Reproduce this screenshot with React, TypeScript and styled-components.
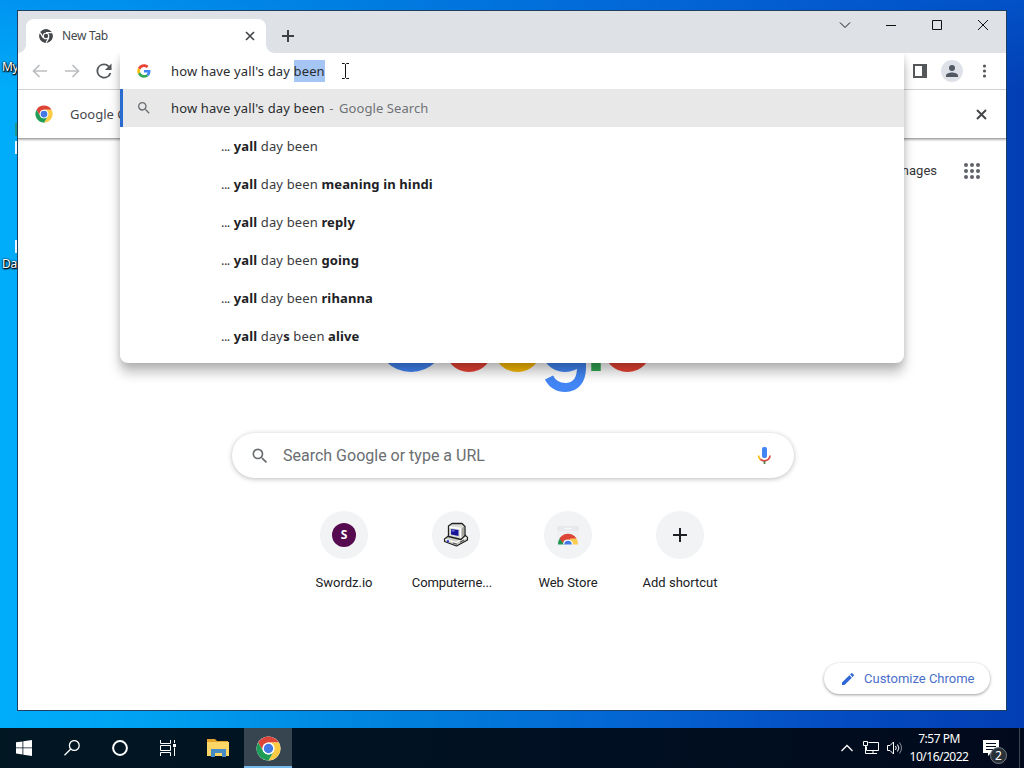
import React from 'react';
import styled, { createGlobalStyle } from 'styled-components';

const GlobalStyle = createGlobalStyle`
  * {
    box-sizing: border-box;
  }
  body {
    margin: 0;
    overflow: hidden;
  }
  svg {
    display: block;
    flex: none;
  }
`;

const Desktop = styled.div`
  position: relative;
  display: flex;
  flex-direction: column;
  justify-content: flex-end;
  width: 1024px;
  height: 768px;
  overflow: hidden;
  background:
    linear-gradient(180deg, rgba(0, 110, 225, 0.4), transparent 12%),
    linear-gradient(90deg, #00adfa 0%, #00a4f4 12%, #0082de 38%, #0464d2 62%, #044ac0 84%, #033eb4 100%);
  font-family: 'Noto Sans', 'Open Sans', sans-serif;
  color: #202124;
`;

const DesktopLabel = styled.span<{ $top: number }>`
  position: absolute;
  left: 2px;
  top: ${(p) => p.$top}px;
  font-size: 12px;
  line-height: 16px;
  letter-spacing: -0.3px;
  color: #fff;
  text-shadow: 1px 1px 1px #000, 0 0 2px #000, 0 1px 2px #000;
`;

const DesktopSliver = styled.span<{ $top: number; $color: string }>`
  position: absolute;
  left: 15px;
  top: ${(p) => p.$top}px;
  width: 2px;
  height: 13px;
  background: ${(p) => p.$color};
`;

const Window = styled.div`
  position: absolute;
  left: 17px;
  top: 10px;
  width: 990px;
  height: 701px;
  display: flex;
  flex-direction: column;
  border: 1px solid #1c3f63;
  background: #fff;
`;

const TitleBar = styled.div`
  display: flex;
  height: 42px;
  flex: none;
  padding-left: 8px;
  background: #dee1e6;
`;

const Tab = styled.div`
  position: relative;
  display: flex;
  align-items: center;
  width: 240px;
  height: 34px;
  margin-top: 8px;
  padding: 0 11px 0 13px;
  border-radius: 8px 8px 0 0;
  background: #fff;
  font-size: 12px;
  color: #45494d;

  &::before,
  &::after {
    content: '';
    position: absolute;
    bottom: 0;
    width: 8px;
    height: 8px;
  }
  &::before {
    left: -8px;
    background: radial-gradient(circle at 0 0, transparent 7.5px, #fff 8px);
  }
  &::after {
    right: -8px;
    background: radial-gradient(circle at 100% 0, transparent 7.5px, #fff 8px);
  }
`;

const TabTitle = styled.span`
  flex: 1;
  margin-left: 9px;
  padding-bottom: 1px;
  letter-spacing: -0.3px;
`;

const NewTabButton = styled.div`
  margin: 19px 0 0 16px;
`;

const WindowButtons = styled.div`
  display: flex;
  margin-left: auto;
`;

const WindowButton = styled.div`
  display: flex;
  justify-content: center;
  width: 46px;
  padding-top: 6px;
`;

const Toolbar = styled.div`
  display: flex;
  align-items: center;
  height: 37px;
  flex: none;
  padding: 0 12px 0 14px;
  border-bottom: 1px solid #d5d7da;
`;

const NavButtons = styled.div`
  display: flex;
  gap: 16px;
`;

const ToolbarActions = styled.div`
  display: flex;
  align-items: center;
  gap: 13px;
  margin-left: auto;
`;

const Avatar = styled.div`
  display: flex;
  align-items: center;
  justify-content: center;
  width: 22px;
  height: 22px;
  border-radius: 50%;
  background: #dee1e8;
`;

const InfoBar = styled.div`
  display: flex;
  align-items: center;
  height: 49px;
  flex: none;
  padding: 0 19px 0 17px;
  border-bottom: 1px solid #a9a9a9;
  box-shadow: 0 1px 2px rgba(0, 0, 0, 0.3);
  font-size: 13px;
  color: #45494d;
`;

const InfoText = styled.span`
  flex: 1;
  margin-left: 17px;
`;

const Page = styled.div`
  position: relative;
  display: flex;
  flex: 1;
  flex-direction: column;
  align-items: center;
  font-family: Roboto, sans-serif;
`;

const PageHeader = styled.div`
  display: flex;
  align-items: center;
  justify-content: flex-end;
  gap: 26px;
  width: 100%;
  height: 63px;
  padding-right: 25px;
  font-size: 13px;
  color: #333;
`;

const SearchBox = styled.div`
  display: flex;
  align-items: center;
  width: 562px;
  height: 45px;
  margin: 40px 0 0 1px;
  padding: 0 23px 0 18px;
  border-radius: 23px;
  background: #fff;
  box-shadow: 0 1px 5px rgba(32, 33, 36, 0.3);
  font-size: 16px;
  color: #6b6e71;
`;

const SearchText = styled.span`
  flex: 1;
  margin-left: 13.5px;
`;

const Shortcuts = styled.div`
  display: flex;
  margin-top: 33px;
`;

const Shortcut = styled.div`
  display: flex;
  flex-direction: column;
  align-items: center;
  width: 112px;
  font-size: 13px;
  line-height: 16px;
  color: #202124;
`;

const ShortcutIcon = styled.div`
  display: flex;
  align-items: center;
  justify-content: center;
  width: 48px;
  height: 48px;
  margin-bottom: 16px;
  border-radius: 50%;
  background: #f1f3f4;
`;

const ShortcutName = styled.span<{ $clipped?: boolean }>`
  margin-right: ${(p) => (p.$clipped ? 8 : 0)}px;
  letter-spacing: ${(p) => (p.$clipped ? '-0.1px' : 'normal')};
`;

const LetterIcon = styled.div`
  width: 24px;
  height: 24px;
  border-radius: 50%;
  background: #560a50;
  font: bold 12px/24px 'Noto Sans', sans-serif;
  text-align: center;
  color: #fff;
`;

const CustomizeButton = styled.div`
  position: absolute;
  right: 16px;
  bottom: 16px;
  display: flex;
  align-items: center;
  gap: 8px;
  width: 166px;
  height: 31px;
  padding-left: 16px;
  border-radius: 16px;
  background: #fff;
  box-shadow: 0 1px 3px rgba(32, 33, 36, 0.45);
  font-size: 13px;
  color: #4a6fc9;
  white-space: nowrap;
`;

const Omnibox = styled.div`
  position: absolute;
  left: 102px;
  top: 42px;
  width: 784px;
  height: 310px;
  border-radius: 0 0 8px 8px;
  background: #fff;
  box-shadow: 0 10px 12px rgba(0, 0, 0, 0.24), 0 2px 6px rgba(0, 0, 0, 0.12);
  clip-path: inset(0 -20px -40px -20px);
  font-size: 13px;
  color: #2a2c2f;
`;

const OmniboxRow = styled.div<{ $selected?: boolean; $height: number }>`
  display: flex;
  align-items: center;
  height: ${(p) => p.$height}px;
  padding-left: ${(p) => (p.$selected ? 13 : 17)}px;
  border-left: ${(p) => (p.$selected ? '3px solid #2a6bd0' : 'none')};
  background: ${(p) => (p.$selected ? '#e8e8e8' : 'transparent')};
`;

const OmniboxText = styled.span<{ $gap: number }>`
  margin-left: ${(p) => p.$gap}px;
  letter-spacing: 0.13px;
  white-space: pre;
`;

const Selection = styled.span`
  padding: 2px 0;
  background: #a5c5f5;
`;

const Muted = styled.span`
  letter-spacing: 0.08px;
  color: #6f7377;
`;

const Dash = styled.span`
  margin: 0 2px 0 1px;
`;

const Suggestion = styled.div`
  display: flex;
  align-items: center;
  height: 38px;
  padding-left: 101px;
  letter-spacing: 0.14px;
  white-space: pre;
  color: #3a3c40;

  b {
    color: #202124;
  }
`;

const Ellipsis = styled.span`
  letter-spacing: -0.6px;
  word-spacing: 1.3px;
`;

const MouseCursor = styled.div`
  position: absolute;
  left: 341px;
  top: 63px;
`;

const Taskbar = styled.div`
  display: flex;
  height: 40px;
  background: linear-gradient(90deg, #011722, #010f22 60%, #010a1c);
  color: #fff;
`;

const TaskButton = styled.div<{ $active?: boolean; $width?: number }>`
  display: flex;
  align-items: center;
  justify-content: center;
  width: ${(p) => p.$width ?? 48}px;
  padding-top: ${(p) => (p.$active ? 2 : 0)}px;
  background: ${(p) => (p.$active ? '#364550' : 'transparent')};
  border-bottom: ${(p) => (p.$active ? '2px solid #76b9ed' : 'none')};
`;

const Tray = styled.div`
  display: flex;
  align-items: center;
  margin: 0 4px 0 auto;
  padding-right: 12px;
  border-right: 1px solid #3d4550;
`;

const TrayIcon = styled.div<{ $gap?: number }>`
  margin-right: ${(p) => p.$gap ?? 8}px;
`;

const Clock = styled.div`
  width: 62px;
  margin-right: 13px;
  font-size: 12px;
  line-height: 18px;
  letter-spacing: -0.5px;
  text-align: center;
  white-space: nowrap;
`;

const Notifications = styled.div`
  position: relative;
`;

const Badge = styled.span`
  position: absolute;
  left: 7px;
  top: 8px;
  width: 17px;
  height: 17px;
  border: 1px solid #777d84;
  border-radius: 50%;
  background: #2a3038;
  font-size: 12px;
  line-height: 15px;
  text-align: center;
`;

const ChromeLogo = ({ size, mono }: { size: number; mono?: boolean }) => (
  <svg width={size} height={size} viewBox="0 0 48 48">
    <circle cx="24" cy="24" r="23" fill={mono ? '#45484b' : '#fff'} />
    <path d="M4.1 12.5A23 23 0 0 1 43.9 12.5H24A11.5 11.5 0 0 0 14 29.7z" fill={mono ? '#45484b' : '#dc4437'} />
    <path d="M43.9 12.5A23 23 0 0 1 24 47L34 29.7A11.5 11.5 0 0 0 24 12.5z" fill={mono ? '#45484b' : '#fbcb43'} />
    <path d="M24 47A23 23 0 0 1 4.1 12.5L14 29.7A11.5 11.5 0 0 0 34 29.7z" fill={mono ? '#45484b' : '#1f9d57'} />
    {mono && <path d="M24 12.5h20M34 29.7L24 47M14 29.7L4.1 12.5" stroke="#fff" strokeWidth="4" />}
    <circle cx="24" cy="24" r="11.5" fill="#fff" />
    <circle cx="24" cy="24" r={mono ? 7.5 : 9} fill={mono ? '#45484b' : '#4279e4'} />
  </svg>
);

const GoogleG = () => (
  <svg width="14" height="14" viewBox="-1 -1 50 50">
    <path fill="#ea4335" d="M24 9.5c3.54 0 6.71 1.22 9.21 3.6l6.85-6.85C35.9 2.38 30.47 0 24 0 14.62 0 6.51 5.38 2.56 13.22l7.98 6.19C12.43 13.72 17.74 9.5 24 9.5z" />
    <path fill="#4285f4" d="M46.98 24.55c0-1.57-.15-3.09-.38-4.55H24v9.02h12.94c-.58 2.96-2.26 5.48-4.78 7.18l7.73 6c4.51-4.18 7.09-10.36 7.09-17.65z" />
    <path fill="#fbbc05" d="M10.53 28.59c-.48-1.45-.76-2.99-.76-4.59s.27-3.14.76-4.59l-7.98-6.19C.92 16.46 0 20.12 0 24c0 3.88.92 7.54 2.56 10.78l7.97-6.19z" />
    <path fill="#34a853" d="M24 48c6.48 0 11.93-2.13 15.89-5.81l-7.73-6c-2.15 1.45-4.92 2.3-8.16 2.3-6.26 0-11.57-4.22-13.47-9.91l-7.98 6.19C6.51 42.62 14.62 48 24 48z" />
  </svg>
);

const SearchIcon = ({ size }: { size: number }) => (
  <svg width={size} height={size} viewBox="0 0 24 24" fill="#6a6d70">
    <path d="M15.5 14h-.79l-.28-.27A6.47 6.47 0 0 0 16 9.5 6.5 6.5 0 1 0 9.5 16c1.61 0 3.09-.59 4.23-1.57l.27.28v.79l5 4.99L20.49 19l-4.99-5zm-6 0C7.01 14 5 11.99 5 9.5S7.01 5 9.5 5 14 7.01 14 9.5 11.99 14 9.5 14z" />
  </svg>
);

const ArrowIcon = ({ right }: { right?: boolean }) => (
  <svg width="16" height="16" viewBox="0 0 16 16" fill="none" stroke="#bcbec1" strokeWidth="1.7">
    <path d={right ? 'M1 8h13M8.5 2l6 6-6 6' : 'M15 8H2M7.5 2l-6 6 6 6'} />
  </svg>
);

const ReloadIcon = () => (
  <svg width="16" height="16" viewBox="3.5 3.5 17 17" fill="#55585b">
    <path d="M17.65 6.35A7.96 7.96 0 0 0 12 4a8 8 0 1 0 7.73 10h-2.08A6 6 0 1 1 12 6c1.66 0 3.14.69 4.22 1.78L13 11h7V4l-2.35 2.35z" />
  </svg>
);

const CloseIcon = ({ size, width }: { size: number; width: number }) => (
  <svg width={size} height={size} viewBox={`0 0 ${size} ${size}`} stroke="#45484b" strokeWidth={width}>
    <path d={`M1 1L${size - 1} ${size - 1}M${size - 1} 1L1 ${size - 1}`} />
  </svg>
);

const AppsIcon = () => (
  <svg width="18" height="18" viewBox="0 0 18 18" fill="#5f6368">
    {[3, 9, 15].map((y) => [3, 9, 15].map((x) => <circle key={`${x}-${y}`} cx={x} cy={y} r="2" />))}
  </svg>
);

const LogoArt = styled.svg`
  width: 272px;
  height: 92px;
  margin-top: 99px;
`;

const GoogleLogo = () => (
  <LogoArt viewBox="376 301 272 92" fill="none">
    <circle cx="411" cy="337" r="30.5" stroke="#4285f4" strokeWidth="9" />
    <circle cx="469" cy="348" r="19.5" stroke="#ea4335" strokeWidth="9" />
    <circle cx="517.5" cy="348" r="19.5" stroke="#fbbc05" strokeWidth="9" />
    <circle cx="565" cy="348" r="19.5" stroke="#4285f4" strokeWidth="9" />
    <path d="M581.5 330V367.5C581.5 380.5 575 387.5 565.5 387.5C558 387.5 552 383.5 549 377.5" stroke="#4285f4" strokeWidth="9" />
    <path d="M596 302V371" stroke="#34a853" strokeWidth="9.5" />
    <circle cx="627.5" cy="348" r="19.5" stroke="#ea4335" strokeWidth="9" />
  </LogoArt>
);

const MicIcon = () => (
  <svg width="14" height="19" viewBox="0 0 14 19" fill="none">
    <rect x="5" y="1" width="5" height="11" rx="2" fill="#4285f4" />
    <path d="M1.5 9.5Q1.7 12 3.3 13.3" stroke="#fbbc05" strokeWidth="1.7" />
    <path d="M3.3 13.3Q7.4 16.3 11.3 13.3Q12.9 12 13.1 9.5" stroke="#d5483b" strokeWidth="1.7" />
    <path d="M7.5 15v3" stroke="#54804c" strokeWidth="1.8" />
  </svg>
);

const ComputerIcon = () => (
  <svg width="26" height="26" viewBox="0 0 26 26" strokeLinejoin="round">
    <path d="M1.5 17L6 13.5 21 12l3.5 3.5v2.5L13.5 24 1.5 19.5z" fill="#cfcfc9" stroke="#222" strokeWidth="1.2" />
    <path d="M2.5 17.3L13 20.5l10.5-5" fill="none" stroke="#fff" strokeWidth="1.3" />
    <path d="M5.5 4L9 1.5h10L22 4.500v9l-4 4-12.500-3z" fill="#dcdcd6" stroke="#222" strokeWidth="1.3" />
    <path d="M18.5 6.500l2.500-2v8.500l-2.500 2.500z" fill="#a5a59f" />
    <path d="M6.5 5L17.500 6.500v9.500" fill="none" stroke="#fff" strokeWidth="1.3" />
    <path d="M8 7l7.500 1v6L8 12.500z" fill="#18149a" />
    <path d="M8.500 7.500h3v2.500l-3-.5z" fill="#5d5dc8" />
    <path d="M10 21l4 1.300M17 20.200l4-2.200" stroke="#555" strokeWidth="1.200" />
    <path d="M4 18.700l2 .7" stroke="#3341dd" strokeWidth="2" />
  </svg>
);

const WebStoreIcon = () => (
  <svg width="24" height="24" viewBox="0 0 24 24">
    <path d="M1 3h22v17q0 1-1 1H2q-1 0-1-1z" fill="#eef0f1" />
    <path d="M1 3h22v5H1z" fill="#e7e9ec" />
    <path d="M9 5.5h6" stroke="#f8f9fa" strokeWidth="1.5" strokeLinecap="round" />
    <path d="M2 21.5a10 10 0 0 1 3-7.5l4 7.5z" fill="#219653" />
    <path d="M3.5 15.5a10 10 0 0 1 17 0l-5 2H8L7 20z" fill="#dc4637" />
    <path d="M20.5 15.5A10 10 0 0 1 22 21.5h-7l-1-6z" fill="#f9cc52" />
    <path d="M7 21.5a5 5 0 0 1 10 0z" fill="#fff" />
    <path d="M8.2 21.5a3.8 3.8 0 0 1 7.6 0z" fill="#4378e4" />
  </svg>
);

const suggestions = [
  <> day been</>,
  <> day been <b>meaning in hindi</b></>,
  <> day been <b>reply</b></>,
  <> day been <b>going</b></>,
  <> day been <b>rihanna</b></>,
  <> day<b>s</b> been <b>alive</b></>,
];

export function App() {
  return (
    <Desktop>
      <GlobalStyle />
      <DesktopLabel $top={59}>My</DesktopLabel>
      <DesktopLabel $top={256}>Da</DesktopLabel>
      <DesktopSliver $top={123} $color="#1c9c8b" />
      <DesktopSliver $top={141} $color="#e8f7ff" />
      <DesktopSliver $top={240} $color="#e8f7ff" />

      <Window>
        <TitleBar>
          <Tab>
            <ChromeLogo size={14} mono />
            <TabTitle>New Tab</TabTitle>
            <CloseIcon size={10} width={1.7} />
          </Tab>
          <NewTabButton>
            <svg width="12" height="12" viewBox="0 0 12 12" stroke="#3c4043" strokeWidth="2">
              <path d="M6 0v12M0 6h12" />
            </svg>
          </NewTabButton>
          <WindowButtons>
            <WindowButton>
              <svg width="12" height="16" viewBox="0 0 12 16" fill="none" stroke="#111">
                <path d="M1 5.5l5 5 5-5" />
              </svg>
            </WindowButton>
            <WindowButton>
              <svg width="12" height="16" viewBox="0 0 12 16" stroke="#111">
                <path d="M1 8.5h10" />
              </svg>
            </WindowButton>
            <WindowButton>
              <svg width="12" height="16" viewBox="0 0 12 16" fill="none" stroke="#111">
                <path d="M1.5 3.5h9v9h-9z" />
              </svg>
            </WindowButton>
            <WindowButton>
              <svg width="12" height="16" viewBox="0 0 12 16" stroke="#111">
                <path d="M1 3l10 10M11 3L1 13" />
              </svg>
            </WindowButton>
          </WindowButtons>
        </TitleBar>

        <Toolbar>
          <NavButtons>
            <ArrowIcon />
            <ArrowIcon right />
            <ReloadIcon />
          </NavButtons>
          <ToolbarActions>
            <svg width="15" height="14" viewBox="0 0 15 14">
              <path d="M1 1h12v12H1z" fill="#fff" stroke="#55585b" strokeWidth="2" />
              <path d="M9 1h4v12H9z" fill="#55585b" />
            </svg>
            <Avatar>
              <svg width="12" height="12" viewBox="0 0 12 12" fill="#515862">
                <circle cx="6" cy="3" r="3" />
                <path d="M0 12V10.5C0 8.5 3.5 7.5 6 7.5s6 1 6 3V12z" />
              </svg>
            </Avatar>
            <svg width="18" height="14" viewBox="0 0 18 14" fill="#55585b">
              <circle cx="8.5" cy="2" r="1.6" />
              <circle cx="8.5" cy="7" r="1.6" />
              <circle cx="8.5" cy="12" r="1.6" />
            </svg>
          </ToolbarActions>
        </Toolbar>

        <InfoBar>
          <ChromeLogo size={18} />
          <InfoText>Google Chrome</InfoText>
          <CloseIcon size={11} width={2} />
        </InfoBar>

        <Page>
          <PageHeader>
            <span>Images</span>
            <AppsIcon />
          </PageHeader>
          <GoogleLogo />
          <SearchBox>
            <SearchIcon size={20} />
            <SearchText>Search Google or type a URL</SearchText>
            <MicIcon />
          </SearchBox>
          <Shortcuts>
            <Shortcut>
              <ShortcutIcon>
                <LetterIcon>S</LetterIcon>
              </ShortcutIcon>
              <ShortcutName>Swordz.io</ShortcutName>
            </Shortcut>
            <Shortcut>
              <ShortcutIcon>
                <ComputerIcon />
              </ShortcutIcon>
              <ShortcutName $clipped>Computerne...</ShortcutName>
            </Shortcut>
            <Shortcut>
              <ShortcutIcon>
                <WebStoreIcon />
              </ShortcutIcon>
              <ShortcutName>Web Store</ShortcutName>
            </Shortcut>
            <Shortcut>
              <ShortcutIcon>
                <svg width="14" height="14" viewBox="0 0 14 14" stroke="#202124" strokeWidth="2">
                  <path d="M7 0v14M0 7h14" />
                </svg>
              </ShortcutIcon>
              <ShortcutName>Add shortcut</ShortcutName>
            </Shortcut>
          </Shortcuts>
          <CustomizeButton>
            <svg width="16" height="16" viewBox="0 0 24 24" fill="#2f68d6">
              <path d="M3 17.25V21h3.75L17.81 9.94l-3.75-3.75L3 17.25zM20.71 7.04a1 1 0 0 0 0-1.41l-2.34-2.34a1 1 0 0 0-1.41 0l-1.83 1.83 3.75 3.75 1.83-1.83z" />
            </svg>
            Customize Chrome
          </CustomizeButton>
        </Page>

        <Omnibox>
          <OmniboxRow $height={36}>
            <GoogleG />
            <OmniboxText $gap={20}>how have yall's day <Selection>been</Selection></OmniboxText>
          </OmniboxRow>
          <OmniboxRow $height={38} $selected>
            <SearchIcon size={16} />
            <OmniboxText $gap={19}>how have yall's day been <Muted><Dash>-</Dash> Google Search</Muted></OmniboxText>
          </OmniboxRow>
          {suggestions.map((rest, index) => (
            <Suggestion key={index}>
              <Ellipsis>... </Ellipsis><b>yall</b>{rest}
            </Suggestion>
          ))}
        </Omnibox>
      </Window>

      <MouseCursor>
        <svg width="9" height="16" viewBox="0 0 9 16" fill="none" stroke="#111">
          <path d="M1 .5h2.5l1 1 1-1H8M4.5 1.5v13M1 15.5h2.5l1-1 1 1H8" />
        </svg>
      </MouseCursor>

      <Taskbar>
        <TaskButton>
          <svg width="16" height="16" viewBox="0 0 16 16" fill="#fff">
            <path d="M0 2.3l6.5-.9v6.1H0zM7.3 1.3L16 0v7.5H7.3zM0 8.3h6.5v6.2L0 13.6zM7.3 8.3H16V16l-8.7-1.3z" />
          </svg>
        </TaskButton>
        <TaskButton>
          <svg width="16" height="16" viewBox="0 0 16 16" fill="none" stroke="#fff" strokeWidth="1.3">
            <circle cx="10.3" cy="5.5" r="4.9" />
            <path d="M6.8 9L.5 15.3" />
          </svg>
        </TaskButton>
        <TaskButton>
          <svg width="16" height="16" viewBox="0 0 16 16" fill="none" stroke="#fff" strokeWidth="2">
            <circle cx="8" cy="8" r="6.9" />
          </svg>
        </TaskButton>
        <TaskButton>
          <svg width="18" height="16" viewBox="0 0 18 16" fill="none" stroke="#fff">
            <path d="M1.5 0v3.5h10V0M1.5 16v-3.5h10V16M1.5 5.5h10v5h-10zM15.5 0v3M15.5 7.5V16" />
            <path d="M14 4h3v3h-3z" fill="#fff" stroke="none" />
          </svg>
        </TaskButton>
        <TaskButton $width={52}>
          <svg width="22" height="18" viewBox="0 0 22 18">
            <path d="M0 0h8l2 2h11v4H0z" fill="#e5a52d" />
            <path d="M0 3h22v14H0z" fill="#fbd667" />
            <path d="M4 10h15v8h-4v-4H8v4H4z" fill="#468bc4" />
          </svg>
        </TaskButton>
        <TaskButton $active>
          <ChromeLogo size={25} />
        </TaskButton>
        <Tray>
          <TrayIcon $gap={10}>
            <svg width="12" height="8" viewBox="0 0 12 8" fill="none" stroke="#fff" strokeWidth="1.3">
              <path d="M.5 7L6 1.5 11.5 7" />
            </svg>
          </TrayIcon>
          <TrayIcon>
            <svg width="16" height="14" viewBox="0 0 16 14" fill="none" stroke="#fff">
              <path d="M5.5 1.5h10v8h-12v-4M10 9.5v3M6 12.5h8M.5.5h4v4h-4zM2.5 4.5v8H6" />
            </svg>
          </TrayIcon>
          <TrayIcon $gap={6}>
            <svg width="15" height="14" viewBox="0 0 15 14" fill="none" stroke="#fff">
              <path d="M.5 4.5h2.5l3.5-3.5v12L3 9.5H.5zM8.5 5q1.5 2 0 4M10.5 3.5q2.8 3.5 0 7" />
              <path d="M12.5 1.5q4 5.5 0 11" stroke="#8a9098" />
            </svg>
          </TrayIcon>
          <Clock>
            <div>7:57 PM</div>
            <div>10/16/2022</div>
          </Clock>
          <Notifications>
            <svg width="24" height="18" viewBox="0 0 24 18">
              <path d="M0 1h16v13H8l-3 3v-3H0z" fill="#fff" />
              <path d="M3 4.5h10M3 7.5h10M3 10.5h7" stroke="#010a1c" />
            </svg>
            <Badge>2</Badge>
          </Notifications>
        </Tray>
      </Taskbar>
    </Desktop>
  );
}

export default App;
